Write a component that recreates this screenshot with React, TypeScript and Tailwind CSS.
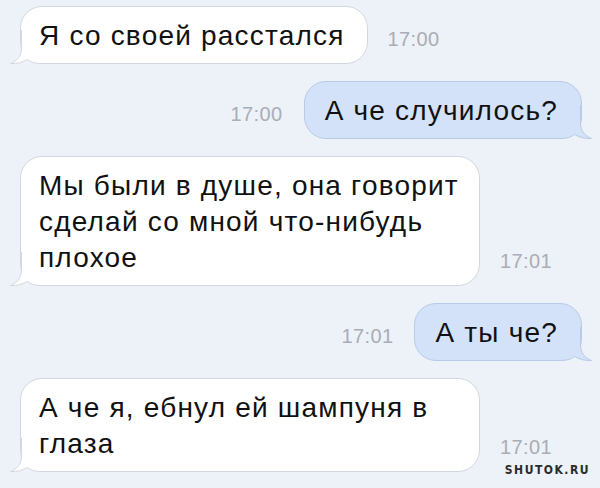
import type { ReactNode } from "react";

type Side = "in" | "out";

function Tail({ side }: { side: Side }) {
  const fill = side === "in" ? "#ffffff" : "#d3e2f8";
  const stroke = side === "in" ? "#d3d8e0" : "#b8cbe6";
  return (
    <svg
      width="44"
      height="34"
      viewBox="0 0 44 34"
      className={
        side === "in"
          ? "absolute -left-[11px] -bottom-px"
          : "absolute -right-[11px] -bottom-px -scale-x-100"
      }
    >
      <path
        d="M11.5 0 L11.5 18 C11.5 26 7 31 0.5 33.5 C7 34 13 32 17.5 29.5 C21 32.5 26 33.5 32 33.5 L44 33.5 L44 0 Z"
        fill={fill}
      />
      <path
        d="M11.5 0 L11.5 18 C11.5 26 7 31 0.5 33.5 C7 34 13 32 17.5 29.5 C21 32.5 26 33.5 32 33.5 L44 33.5"
        fill="none"
        stroke={stroke}
        strokeWidth="1"
      />
    </svg>
  );
}

function Time({ children }: { children: ReactNode }) {
  return (
    <span className="text-[20px] leading-none tracking-[0.4px] text-[#a9adb5] mb-[15px] shrink-0">
      {children}
    </span>
  );
}

function Bubble({ side, lines }: { side: Side; lines: string[] }) {
  const multi = lines.length > 1;
  return (
    <div
      className={
        side === "in"
          ? `relative ${multi ? "w-[460px]" : "w-fit"} rounded-[22px] border border-[#d3d8e0] bg-white pl-[18px] pr-[22px] pt-[11px] pb-[9px] text-[28px] leading-[36px] tracking-[1.2px] text-[#111] whitespace-nowrap`
          : "relative w-fit rounded-[22px] border border-[#b8cbe6] bg-[#d3e2f8] pl-[20px] pr-[23px] pt-[11px] pb-[9px] text-[28px] leading-[36px] tracking-[1.2px] text-[#111] whitespace-nowrap"
      }
    >
      <Tail side={side} />
      <div className="relative">
        {lines.map((l) => (
          <div key={l}>{l}</div>
        ))}
      </div>
    </div>
  );
}

const messages: { side: Side; lines: string[]; time: string }[] = [
  { side: "in", lines: ["Я со своей расстался"], time: "17:00" },
  { side: "out", lines: ["А че случилось?"], time: "17:00" },
  {
    side: "in",
    lines: ["Мы были в душе, она говорит", "сделай со мной что-нибудь", "плохое"],
    time: "17:01",
  },
  { side: "out", lines: ["А ты че?"], time: "17:01" },
  { side: "in", lines: ["А че я, ебнул ей шампуня в", "глаза"], time: "17:01" },
];

export default function App() {
  return (
    <div className="relative w-[600px] h-[488px] overflow-hidden bg-[#edf1f8] font-['Liberation_Sans',Arial,sans-serif]">
      <div className="flex flex-col gap-[17px] pt-[6px] pl-[20px] pr-[18px]">
        {messages.map((m, i) =>
          m.side === "in" ? (
            <div key={i} className="flex items-end gap-[20px]">
              <Bubble side="in" lines={m.lines} />
              <Time>{m.time}</Time>
            </div>
          ) : (
            <div key={i} className="flex items-end justify-end gap-[21px]">
              <Time>{m.time}</Time>
              <Bubble side="out" lines={m.lines} />
            </div>
          ),
        )}
      </div>
      <div className="absolute right-[10px] bottom-[9px] text-[12px] font-bold tracking-[1.5px] text-[#2b2b2b] font-['DejaVu_Sans_Condensed','DejaVu_Sans',sans-serif]">
        SHUTOK.RU
      </div>
    </div>
  );
}
